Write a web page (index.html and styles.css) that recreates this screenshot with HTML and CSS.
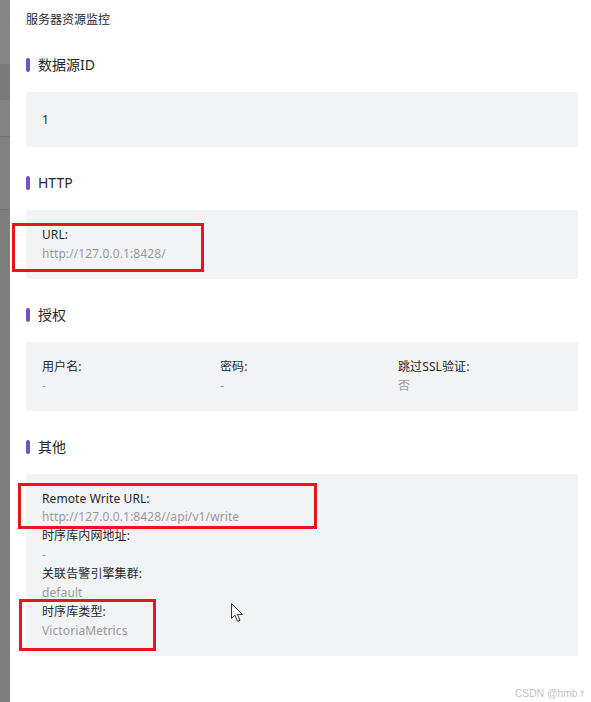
FILE: index.html
```html
<!DOCTYPE html>
<html lang="zh-CN">
<head>
<meta charset="utf-8">
<title>服务器资源监控</title>
<link rel="stylesheet" href="styles.css">
</head>
<body>
<div class="page">
  <div class="mask">
    <div class="mask-band b1"></div>
    <div class="mask-band b2"></div>
    <div class="mask-band b3"></div>
    <div class="mask-band b4"></div>
    <div class="mask-band b5"></div>
  </div>
  <div class="drawer">
    <div class="drawer-title">服务器资源监控</div>

    <section class="section">
      <h3 class="section-head">数据源ID</h3>
      <div class="panel panel-id">
        <div class="plain">1</div>
      </div>
    </section>

    <section class="section">
      <h3 class="section-head">HTTP</h3>
      <div class="panel">
        <div class="field">
          <div class="label">URL:</div>
          <div class="value">http://127.0.0.1:8428/</div>
        </div>
      </div>
    </section>

    <section class="section">
      <h3 class="section-head">授权</h3>
      <div class="panel panel-grid">
        <div class="field">
          <div class="label">用户名:</div>
          <div class="value">-</div>
        </div>
        <div class="field">
          <div class="label">密码:</div>
          <div class="value">-</div>
        </div>
        <div class="field">
          <div class="label">跳过SSL验证:</div>
          <div class="value">否</div>
        </div>
      </div>
    </section>

    <section class="section">
      <h3 class="section-head">其他</h3>
      <div class="panel">
        <div class="field">
          <div class="label">Remote Write URL:</div>
          <div class="value">http://127.0.0.1:8428//api/v1/write</div>
        </div>
        <div class="field">
          <div class="label">时序库内网地址:</div>
          <div class="value">-</div>
        </div>
        <div class="field">
          <div class="label">关联告警引擎集群:</div>
          <div class="value">default</div>
        </div>
        <div class="field">
          <div class="label">时序库类型:</div>
          <div class="value">VictoriaMetrics</div>
        </div>
      </div>
    </section>
  </div>

  <div class="mark mark-url"></div>
  <div class="mark mark-remote"></div>
  <div class="mark mark-type"></div>

  <svg class="cursor" width="13" height="20" viewBox="0 0 13 20">
    <path d="M0.5 0.5 L0.5 15.5 L4 12.2 L6.6 18.3 L9 17.3 L6.5 11.4 L11.3 11.4 Z" fill="#fff" stroke="#333" stroke-width="1" stroke-linejoin="round"/>
  </svg>

  <div class="watermark">CSDN @hmb<span class="arrow">↑</span></div>
</div>
</body>
</html>
```
FILE: styles.css
```css
* { box-sizing: border-box; }

html, body {
  margin: 0;
  padding: 0;
  height: 100%;
  background: #ffffff;
}

body {
  font-family: "Noto Sans", "Noto Sans CJK SC", sans-serif;
  color: #262626;
  overflow: hidden;
}

.page {
  position: relative;
  display: flex;
  height: 702px;
}

.mask {
  width: 10px;
  flex: none;
  display: flex;
  flex-direction: column;
  background: #7d7d7e;
}

.mask-band { flex: none; }
.b1 { height: 64px; background: #858585; }
.b2 { height: 36px; background: #7b7b7b; }
.b3 { height: 37px; background: #838383; border-bottom: 1px solid #737373; }
.b4 { height: 73px; background: #818181; border-bottom: 1px solid #737373; }
.b5 { flex: 1; background: #7e7e7f; }

.drawer {
  flex: 1;
  padding: 11px 13px 0 16px;
  background: #ffffff;
}

.drawer-title {
  font-size: 12px;
  line-height: 18px;
  color: #262626;
}

.section { margin-top: 25px; }

.section-head {
  margin: 0 0 16px;
  display: flex;
  align-items: center;
  gap: 8px;
  font-size: 14px;
  font-weight: 400;
  line-height: 22px;
  color: #262626;
}

.section-head::before {
  content: "";
  width: 4px;
  height: 14px;
  border-radius: 2px;
  background: #7651c3;
}

.panel {
  background: #f2f3f5;
  padding: 16px 16px 15px;
}

.panel-id { padding: 19px 16px 17px; }

.panel-grid {
  display: grid;
  grid-template-columns: repeat(3, 1fr);
  column-gap: 14px;
}

.plain, .label, .value {
  font-size: 12px;
  line-height: 18.9px;
  letter-spacing: 0.1px;
}

.plain { color: #262626; }
.label { color: #262626; }
.value { color: #999999; }

.mark {
  position: absolute;
  border: 3px solid #e8141e;
}

.mark-url { left: 12px; top: 223px; width: 192px; height: 49px; }
.mark-remote { left: 18px; top: 483px; width: 299px; height: 46px; }
.mark-type { left: 19px; top: 599px; width: 137px; height: 52px; }

.cursor {
  position: absolute;
  left: 231px;
  top: 603px;
}

.watermark {
  position: absolute;
  right: 5px;
  bottom: 3px;
  font-family: "Liberation Sans", Arial, sans-serif;
  font-size: 10.3px;
  color: #c4c4c4;
  white-space: nowrap;
}

.arrow {
  font-family: "DejaVu Sans", sans-serif;
  font-size: 9px;
  margin-left: 1px;
}
```
